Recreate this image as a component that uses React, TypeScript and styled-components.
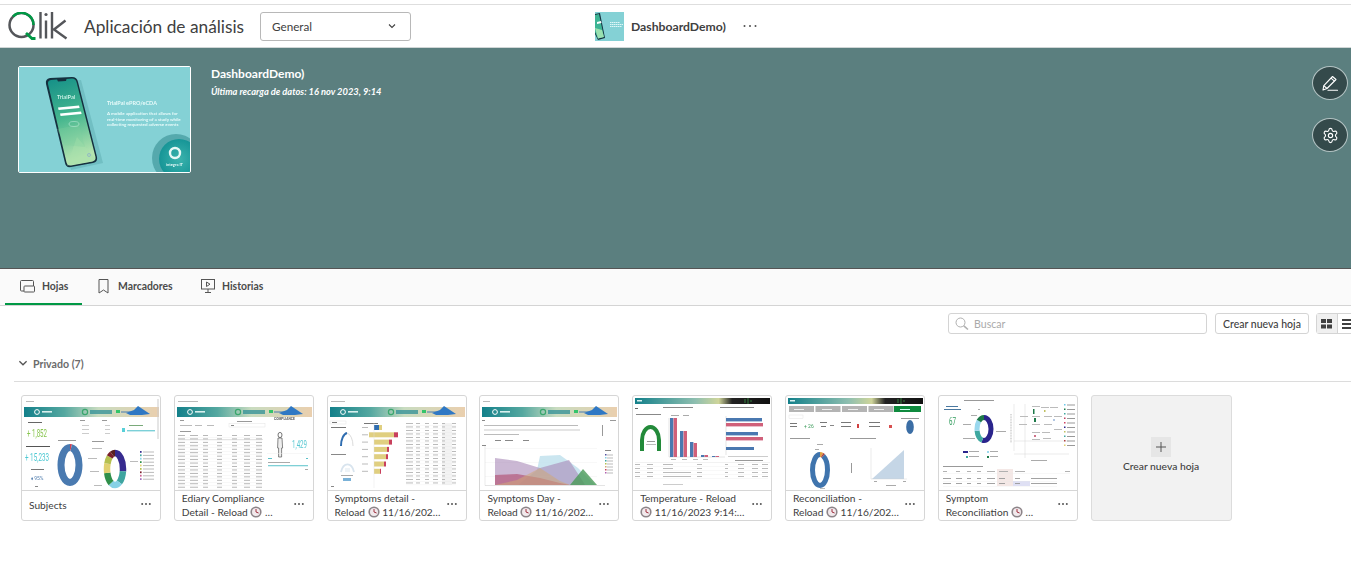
import React from "react";
import styled, { createGlobalStyle } from "styled-components";
import { Settings } from "lucide-react";

const Global = createGlobalStyle`
  html, body { margin: 0; padding: 0; background: #fff; }
  body { font-family: "Lato", "Open Sans", "Liberation Sans", sans-serif; color: #404040; }
  * { box-sizing: border-box; }
`;

const Page = styled.div`width: 1351px; height: 583px; overflow: hidden; background: #fff;`;

const Header = styled.header`
  height: 44px; margin-top: 4px; border-top: 1px solid #dedede;
  border-bottom: 1px solid #d0d6d6;
  display: grid; grid-template-columns: 595px 1fr; align-items: center;
`;
const HeaderLeft = styled.div`display: flex; align-items: center; padding-left: 8px;`;
const HeaderCenter = styled.div`display: flex; align-items: center;`;
const AppTitle = styled.div`margin-left: 15px; font-size: 17.3px; color: #404040; white-space: nowrap; width: 176px;`;
const Select = styled.div`
  width: 151px; height: 29px; border: 1px solid #b8b8b8; border-radius: 3px;
  display: flex; align-items: center; justify-content: space-between; padding: 0 13px 0 11px;
  font-size: 11.7px; color: #404040;
`;
const HeaderName = styled.div`margin-left: 7px; font-size: 12.2px; font-weight: 700; color: #404040; width: 110px;`;
const Hero = styled.section`
  height: 220px; background: #5b7f7f; position: relative;
  padding: 18px 0 0 18px; display: flex; gap: 20px;
`;
const HeroImage = styled.div`
  width: 173px; height: 107px; border: 1px solid #fff; border-radius: 2px; overflow: hidden;
  svg { display: block; filter: blur(.4px); }
`;
const HeroText = styled.div`color: #fff;`;
const HeroTitle = styled.div`font-size: 12px; font-weight: 700; line-height: 16px;`;
const HeroSub = styled.div`font-size: 9.3px; font-style: italic; font-weight: 700; line-height: 12px; margin-top: 4px;`;
const HeroActions = styled.div`
  position: absolute; right: 3px; top: 18px; display: flex; flex-direction: column; gap: 18px;
`;
const RoundBtn = styled.div`
  width: 36px; height: 34px; border-radius: 50%; background: #344a4b; border: 1px solid #b4c4c4;
  display: flex; align-items: center; justify-content: center; color: #fff;
`;
const Tabs = styled.nav`
  height: 38px; background: #fafafa; border-top: 1px solid #555; border-bottom: 1px solid #d4d4d4;
  display: flex; padding-left: 5px;
`;
const Tab = styled.div<{ $active?: boolean; $w: number; $pad: number; $gap?: number }>`
  width: ${p => p.$w}px; height: 36px; padding-left: ${p => p.$pad}px; display: flex; align-items: center; gap: ${p => p.$gap ?? 7}px;
  font-size: 10.4px; font-weight: 700; color: #4a4a4a;
  border-bottom: 2px solid ${p => (p.$active ? "#009845" : "transparent")};
`;
const Toolbar = styled.div`
  height: 28px; padding-top: 7px; display: flex; align-items: flex-start; justify-content: flex-end; margin-right: -8px;
`;
const Search = styled.div`
  width: 259px; height: 21px; border: 1px solid #d4d4d4; border-radius: 3px; display: flex; align-items: center;
  padding-left: 6px; gap: 5px; font-size: 10.6px; color: #aaa;
`;
const Btn = styled.div`
  margin-left: 8px; width: 94px; height: 21px; border: 1px solid #d4d4d4; border-radius: 3px;
  display: flex; align-items: center; justify-content: center; font-size: 10.5px; font-weight: 500; color: #404040;
`;
const Toggle = styled.div`
  margin-left: 7px; width: 43px; height: 21px; border: 1px solid #d4d4d4; border-radius: 3px; display: flex;
`;
const ToggleCell = styled.div<{ $on?: boolean }>`
  width: 21px; display: flex; align-items: center; justify-content: center;
  background: ${p => (p.$on ? "#f0f0f0" : "#fff")}; border-right: 1px solid #d4d4d4;
`;
const SectionHead = styled.div`
  margin: 22px 0 0 14px; height: 26px; border-bottom: 1px solid #dcdcdc; padding: 0 0 8px 3px;
  display: flex; align-items: flex-start; gap: 4px; font-size: 10.6px; font-weight: 700; color: #6b6b6b; line-height: 16px;
  svg { margin-top: 1px; }
`;
const Cards = styled.div`
  padding: 13px 0 0 21px; display: flex; gap: 12.8px;
`;
const Card = styled.div`
  width: 140px; height: 126px; border: 1px solid #d6d6d6; border-radius: 3px; overflow: hidden; flex: none;
  display: flex; flex-direction: column; background: #fff;
`;
const Thumb = styled.div`
  height: 95px; border-bottom: 1px solid #d6d6d6; overflow: hidden; flex: none;
  svg { display: block; filter: blur(.42px); }
`;
const CardFoot = styled.div`
  flex: 1; display: flex; align-items: center; justify-content: space-between; padding: 0 9px 1px 7px;
`;
const CardTitle = styled.div`width: 108px; font-size: 10.2px; line-height: 14px; color: #404040;`;
const CardLine = styled.div`white-space: nowrap; overflow: hidden;`;
const NewCard = styled.div`
  width: 141px; height: 126px; background: #f2f2f2; border: 1px solid #dcdcdc; border-radius: 3px; flex: none;
  display: flex; flex-direction: column; align-items: center; padding-top: 41px; gap: 3px;
  font-size: 10.3px; font-weight: 500; color: #404040;
`;
const PlusBox = styled.div`
  width: 20px; height: 20px; background: #e6e6e6; display: flex; align-items: center; justify-content: center;
`;

const Clock = () => (
  <svg width="12" height="12" viewBox="0 0 12 12" style={{ verticalAlign: "-2px" }}>
    <circle cx="6" cy="6" r="5.6" fill="#8c8488" />
    <circle cx="6" cy="6" r="4" fill="#f1e9ec" />
    <path d="M6 3v3l2.6 1" stroke="#a0303f" strokeWidth="1" fill="none" />
  </svg>
);
const Dots = () => (
  <svg width="10" height="4" viewBox="0 0 10 4" style={{ flex: "none", marginBottom: 2 }}>
    <circle cx="1.2" cy="2" r="1" fill="#555" /><circle cx="5" cy="2" r="1" fill="#555" /><circle cx="8.8" cy="2" r="1" fill="#555" />
  </svg>
);

const QlikLogo = () => (
  <svg width="61" height="28" viewBox="0 0 61 28" fill="none">
    <circle cx="13.500" cy="13" r="12" stroke="#54565a" strokeWidth="2.500" />
    <path d="M5 4.500A12 12 0 0 1 25.500 13" stroke="#009845" strokeWidth="2.500" />
    <path d="M18 21L24 26.500H27.500" stroke="#009845" strokeWidth="2.800" />
    <path d="M32.500 0V26.500M38 8.500V26.500M44 0V26.500M57.500 8.500L46 17.500L58.500 26.500" stroke="#54565a" strokeWidth="2.400" />
    <circle cx="38" cy="2.500" r="1.600" fill="#54565a" />
  </svg>
);

type Seg = [number, string];
const Donut = ({ cx, cy, rx, ry, w, segs }: { cx: number; cy: number; rx: number; ry: number; w: number; segs: Seg[] }) => {
  let off = 0;
  return (
    <g transform={`translate(${cx} ${cy}) rotate(-90)`}>
      {segs.map(([v, c], i) => {
        const el = <ellipse key={i} rx={ry} ry={rx} fill="none" stroke={c} strokeWidth={w} pathLength={100} strokeDasharray={`${v} ${100 - v}`} strokeDashoffset={-off} />;
        off += v;
        return el;
      })}
    </g>
  );
};
const Banner = ({ y = 11 }: { y?: number }) => (
  <g>
    <defs>
      <linearGradient id="bn" x1="0" x2="1"><stop offset="0" stopColor="#13808a" /><stop offset=".3" stopColor="#55a8a0" /><stop offset=".55" stopColor="#c9dcc0" /><stop offset="1" stopColor="#eacfae" /></linearGradient>
    </defs>
    <rect x="2" y={y} width="135" height="10" fill="url(#bn)" />
    <circle cx="15" cy={y + 5} r="2.4" fill="none" stroke="#fff" strokeWidth="1" />
    <rect x="20" y={y + 4} width="10" height="1.6" fill="#d8f0ee" />
    <circle cx="63" cy={y + 5} r="2.6" fill="none" stroke="#3aa76d" strokeWidth="1.2" />
    <rect x="68" y={y + 3} width="22" height="4" fill="#2f8f95" opacity=".75" />
    <rect x="94" y={y + 3} width="4" height="3" fill="#35c46a" />
    <rect x="99" y={y + 4} width="12" height="2" fill="#8fa9b4" />
    <path d={`M104 ${y + 6} L112 ${y + 3} L116 ${y - 1} L122 ${y + 3} L128 ${y + 7} L120 ${y + 8} L108 ${y + 8}Z`} fill="#2f78c4" />
  </g>
);
const TopBar = () => (
  <g>
    <defs>
      <linearGradient id="tb" x1="0" x2="1"><stop offset="0" stopColor="#13808a" /><stop offset=".45" stopColor="#8fbfb0" /><stop offset=".62" stopColor="#cfd59a" /><stop offset=".72" stopColor="#222" /><stop offset="1" stopColor="#111" /></linearGradient>
    </defs>
    <rect x="2" y="2" width="135" height="6" fill="url(#tb)" />
    <path d="M112 7V3M115 8V2M118 6V4" stroke="#3fae4f" strokeWidth=".7" />
    <rect x="4" y="4" width="5" height="1.5" fill="#d8f0ee" />
  </g>
);
const Cap = ({ x, y, w, c = "#999", h = 1 }: { x: number; y: number; w: number; c?: string; h?: number }) => <rect x={x} y={y} width={w} height={h} fill={c} />;
const Big = ({ x, y, w, c, children }: { x: number; y: number; w: number; c: string; children: string }) => (
  <text x={x} y={y} fontSize="10.500" fill={c} textLength={w} lengthAdjust="spacingAndGlyphs">{children}</text>
);
const Table = ({ x, y, rows, step, cols, c = "#a5a5a5" }: { x: number; y: number; rows: number; step: number; cols: [number, number][]; c?: string }) => (
  <g>
    {Array.from({ length: rows }).map((_, r) => (
      <g key={r}>
        {cols.map(([cx, w], i) => <rect key={i} x={x + cx} y={y + r * step} width={w} height=".9" fill={c} />)}
        <rect x={x} y={y + r * step + step * 0.65} width={cols[cols.length - 1][0] + cols[cols.length - 1][1]} height=".3" fill="#e8e8e8" />
      </g>
    ))}
  </g>
);
const Svg = ({ children }: { children: React.ReactNode }) => <svg width="138" height="94" viewBox="0 0 138 94" fontFamily="Roboto, sans-serif">{children}</svg>;

const T1 = () => (
  <Svg>
    <Cap x={4} y={5} w={8} c="#bbb" /><Banner />
    <Cap x={6} y={26} w={14} c="#666" />
    <Big x={5} y={41} w={20} c="#86c54c">+ 1,852</Big>
    <Cap x={4} y={50} w={24} c="#555" />
    <Big x={3} y={65} w={24} c="#4cc8d2">+ 15,233</Big>
    <Cap x={9} y={73} w={13} c="#777" />
    <text x="9" y="84" fontSize="5" fill="#5580b0">⬧ 95%</text>
    <Cap x={13} y={90} w={3} c="#888" />
    <Cap x={58} y={24} w={5} /><Cap x={60} y={29} w={7} c="#ccc" /><Cap x={60} y={33} w={7} c="#ccc" /><Cap x={60} y={37} w={7} c="#ccc" />
    <Cap x={80} y={24} w={5} /><Cap x={83} y={29} w={5} c="#ccc" /><Cap x={83} y={33} w={5} c="#ccc" /><Cap x={83} y={37} w={5} c="#ccc" />
    <Cap x={107} y={29} w={14} c="#7aaa7a" /><rect x="100" y="32" width="3" height="4" fill="#58d0d8" /><Cap x={105} y={34} w={28} c="#7cd0d8" h={1.4} />
    <Cap x={36} y={44} w={18} /><Cap x={70} y={45} w={12} />
    <Donut cx={48} cy={69} rx={9} ry={17.5} w={7} segs={[[1.5, "#d04050"], [98.5, "#4a7ab0"]]} />
    <Donut cx={93} cy={73} rx={8} ry={16} w={6.5} segs={[[28, "#372b8f"], [15, "#3fa5a0"], [13, "#86d1e6"], [14, "#2f8f4a"], [12, "#e0d070"], [9, "#b5c050"], [5, "#7a1f2a"], [4, "#5a1f1f"]]} />
    <Cap x={70} y={52} w={10} c="#bbb" /><Cap x={66} y={62} w={9} c="#bbb" /><Cap x={68} y={75} w={9} c="#bbb" /><Cap x={72} y={89} w={8} c="#bbb" /><Cap x={108} y={65} w={8} c="#bbb" />
    {["#372b8f", "#3fa5a0", "#86d1e6", "#2f8f4a", "#e0d070", "#b5c050", "#7a1f2a", "#d06090", "#a070c0"].map((c, i) => (
      <g key={i}><rect x="118" y={55 + i * 3.4} width="1.6" height="1.8" fill={c} /><Cap x={121} y={55.5 + i * 3.4} w={11} c="#bbb" /></g>
    ))}
    <rect x="135.500" y="3" width="1" height="40" fill="#ccc" />
  </Svg>
);
const T2 = () => (
  <Svg>
    <Cap x={3} y={5} w={20} c="#bbb" /><Banner />
    <Cap x={5} y={24} w={4} /><Cap x={5} y={29} w={12} c="#bbb" /><Cap x={20} y={29} w={7} c="#bbb" /><Cap x={32} y={29} w={7} c="#bbb" />
    <Cap x={62} y={25} w={15} /><rect x="54" y="27.500" width="36" height="3.500" fill="none" stroke="#ddd" strokeWidth=".4" /><Cap x={56} y={29} w={3} c="#888" />
    <Cap x={5} y={35} w={11} c="#999" />
    <Table x={3} y={39} rows={17} step={3.45} cols={[[0, 7], [12, 8], [25, 5], [39, 5], [54, 5], [66, 6], [78, 6]]} c="#b0b0b0" />
    <Cap x={3} y={43} w={85} c="#bbb" h={.4} />
    <text x="99" y="24" fontSize="3.300" fontWeight="700" fill="#555">COMPLIANCE</text>
    <ellipse cx="105" cy="39" rx="2" ry="2.600" fill="none" stroke="#555" strokeWidth=".8" />
    <path d="M103 42h4l.6 10h-1v9h-3v-9h-1z" fill="#eee" stroke="#555" strokeWidth=".7" />
    <Big x={117} y={52} w={15} c="#58c8d2">1,429</Big>
    <Cap x={92} y={57} w={44} c="#eee" h={.5} />
    <Cap x={93} y={62} w={4} c="#5cc0c8" /><Cap x={131} y={62} w={2} c="#5cc0c8" />
    <Cap x={93} y={66} w={22} c="#aaa" />
    <rect x="93" y="69" width="40" height="1.300" fill="#7fd0d6" />
    <Cap x={130} y={73} w={3} c="#aaa" />
  </Svg>
);
const T3 = () => {
  const ws: [number, string, number, string][] = [[5, "#2f6db0", 3, "#e0cf80"], [25, "#e0cf80", 4, "#c8405c"], [15, "#e0cf80", 3, "#c8405c"], [13, "#e0cf80", 2, "#c8405c"], [12, "#e0cf80", 2, "#c8405c"], [10, "#e0cf80", 2, "#c8405c"], [6, "#e0cf80", 1, "#c8405c"]];
  return (
    <Svg>
      <Cap x={3} y={5} w={14} c="#bbb" /><Banner />
      <rect x="2" y="25" width="16" height="3" fill="none" stroke="#ddd" strokeWidth=".4" /><Cap x={4} y={26} w={5} c="#777" />
      <Cap x={3} y={31} w={15} c="#777" /><Cap x={36} y={27} w={14} c="#777" />
      <path d="M13 50A7 13 0 0 1 19 37" fill="none" stroke="#2f6db0" strokeWidth="2" />
      <path d="M19 37A7 13 0 0 1 25 50" fill="none" stroke="#ccc" strokeWidth=".7" />
      <Cap x={3} y={58} w={15} c="#888" />
      <path d="M13 76A7 12 0 0 1 26 76" fill="none" stroke="#d8e4ee" strokeWidth="1.800" />
      <rect x="17" y="72" width="5" height="4" fill="#eef3f7" />
      <Cap x={13} y={79} w={12} c="#aaa" /><rect x="15" y="82" width="8" height="3" fill="#7ab2d8" />
      <Cap x={3} y={90} w={3} c="#888" />
      {ws.map(([a, ca, b, cb], i) => {
        const x = i === 1 ? 41 : 46;
        return <g key={i}><rect x={x} y={29 + i * 7.3} width={a} height="5" fill={ca} /><rect x={x + a} y={29 + i * 7.3} width={b} height="5" fill={cb} /><Cap x={34} y={31 + i * 7.3} w={6} c="#bbb" /></g>;
      })}
      <path d="M46 27V92" stroke="#ddd" strokeWidth=".4" />
      <rect x="114" y="27" width="10" height="62" fill="#f3f3f3" />
      <Table x={78} y={27} rows={18} step={3.5} cols={[[0, 7], [10, 4], [19, 4], [27, 5], [36, 3], [46, 4]]} c="#b4b4b4" />
    </Svg>
  );
};
const T4 = () => (
  <Svg>
    <Cap x={3} y={5} w={7} c="#bbb" /><Banner />
    <Cap x={2} y={24} w={3} c="#888" /><Cap x={130} y={24} w={6} c="#999" />
    <Cap x={4} y={29} w={94} c="#bbb" /><Cap x={4} y={33.500} w={96} c="#ccc" /><Cap x={4} y={38} w={35} c="#bbb" />
    <rect x="122" y="29" width="1" height="11" fill="#999" />
    <Cap x={15} y={44} w={6} c="#888" /><Cap x={25} y={44} w={8} c="#888" /><Cap x={43} y={44} w={6} c="#888" /><Cap x={2} y={49} w={4} c="#888" />
    {[52, 66, 80].map(y => <Cap key={y} x={5} y={y} w={112} c="#eee" h={.4} />)}
    <path d="M38 89L57 74 60 60 80 59 98 72 115 89z" fill="#c5e3ee" opacity=".9" />
    <path d="M15 89L15 62 37 65 60 72 89 64 102 84 105 89z" fill="#a988b8" opacity=".6" />
    <path d="M15 89L15 79 37 78 60 82 80 87 90 89z" fill="#b04a6a" opacity=".6" />
    <path d="M15 89L37 84 60 72 80 85 90 89z" fill="#d0a878" opacity=".55" />
    <path d="M90 89L103 73 117 89z" fill="#4a9a58" opacity=".8" />
    <path d="M5 89.500H125" stroke="#bbb" strokeWidth=".4" /><path d="M5 50V89.500" stroke="#ccc" strokeWidth=".4" />
    <Cap x={125} y={54} w={6} c="#888" />
    {["#5050a0", "#86d1e6", "#3fa5a0", "#b5c050", "#d0a878", "#c8405c", "#b060b0"].map((c, i) => <g key={i}><rect x="125" y={58 + i * 3} width="1.500" height="1.500" fill={c} /><Cap x={127} y={58.500 + i * 3} w={6} c="#bbb" /></g>)}
  </Svg>
);
const T5 = () => (
  <Svg>
    <TopBar />
    <Cap x={2} y={12} w={3} c="#666" />
    <Cap x={30} y={11} w={30} c="#888" /><Cap x={87} y={11} w={34} c="#888" /><Cap x={3} y={18} w={25} c="#888" />
    <path d="M9 55V44A8.500 13 0 0 1 26 44V55" fill="none" stroke="#238a3a" strokeWidth="4" />
    <Cap x={14} y={45} w={8} c="#999" /><Cap x={13} y={48} w={10} c="#bbb" />
    <Cap x={38} y={19} w={8} c="#aaa" /><Cap x={50} y={19} w={6} c="#aaa" />
    <path d="M36 22V61H92" stroke="#bbb" strokeWidth=".4" fill="none" />
    {[[37, 22, 22], [47, 35, 35], [57, 46, 47], [68, 59, 59], [79, 60, 60]].map(([x, a, b], i) => (
      <g key={i}>
        <rect x={x} y={a} width="3.400" height={61 - a} fill="#4a78b0" />
        <rect x={x + 3.600} y={b} width="3.400" height={61 - b} fill="#d0607a" />
      </g>
    ))}
    <Cap x={38} y={63} w={5} c="#bbb" /><Cap x={49} y={63} w={5} c="#bbb" /><Cap x={60} y={63} w={5} c="#bbb" /><Cap x={70} y={63} w={5} c="#bbb" />
    <path d="M93 20V59" stroke="#bbb" strokeWidth=".4" />
    <Cap x={93} y={22} w={36} c="#4a78b0" h={3.400} /><Cap x={93} y={27} w={37} c="#d0607a" h={3.400} />
    <Cap x={93} y={36} w={32} c="#4a78b0" h={3.400} /><Cap x={93} y={41} w={37} c="#d0607a" h={3.400} />
    <Cap x={93} y={51} w={28} c="#4a78b0" h={3} />
    <Cap x={95} y={60} w={40} c="#ccc" /><Cap x={102} y={64} w={28} c="#999" />
    <Cap x={2} y={66} w={135} c="#ddd" h={.4} />
    <Table x={2} y={68} rows={2} step={4} cols={[[0, 5], [12, 6], [28, 10], [62, 5], [90, 3], [103, 6], [117, 6], [127, 6]]} c="#b4b4b4" />
    <Table x={2} y={76} rows={2} step={4} cols={[[0, 5], [12, 6], [28, 28], [62, 5], [90, 3], [103, 6], [117, 6], [127, 6]]} c="#b4b4b4" />
    <Cap x={30} y={88} w={20} c="#ccc" />
  </Svg>
);
const T6 = () => (
  <Svg>
    <TopBar />
    {[0, 1, 2, 3].map(i => <rect key={i} x={3 + i * 26.500} y="10" width="25" height="6" fill="#b4b4b4" />)}
    <rect x="108" y="10" width="27" height="6" fill="#0f8a3e" />
    {[8, 36, 62, 88, 114].map((x, i) => <Cap key={x} x={x} y={13} w={10} c={i === 4 ? "#cfe" : "#eee"} />)}
    <rect x="3" y="19" width="14" height="3.500" fill="none" stroke="#ddd" strokeWidth=".4" />
    <Cap x={4} y={27} w={7} c="#777" /><Cap x={4} y={30} w={7} c="#777" /><text x="18" y="32" fontSize="5" fill="#3a9a5a">+ 26</text>
    <Cap x={34} y={26} w={7} c="#777" /><Cap x={35} y={30} w={5} c="#777" /><Cap x={44} y={29} w={4} c="#888" />
    <Cap x={55} y={26} w={10} c="#777" /><Cap x={55} y={30} w={10} c="#777" /><rect x="71" y="28" width="2" height="4" fill="#d04040" />
    <Cap x={83} y={26} w={11} c="#777" /><Cap x={83} y={30} w={11} c="#777" /><rect x="103" y="29" width="3" height="3" fill="#d85050" />
    <Cap x={115} y={22} w={18} c="#999" />
    <ellipse cx="124" cy="31" rx="3.800" ry="7" fill="#3b6ea5" />
    <Cap x={4} y={42} w={20} c="#999" /><Cap x={64} y={42} w={26} c="#999" />
    <Cap x={31} y={48} w={6} c="#aaa" /><Cap x={29} y={53} w={4} c="#aaa" />
    <Donut cx={34} cy={74} rx={7.500} ry={15.500} w={5} segs={[[3, "#e0a040"], [2, "#b04040"], [95, "#3f74ad"]]} />
    <Cap x={34} y={92} w={5} c="#bbb" />
    <path d="M86 83L118 54V83z" fill="#c5d6e6" />
    <path d="M85 52V83H121" stroke="#ccc" strokeWidth=".4" fill="none" />
    <Cap x={65} y={67} w={1} c="#999" h={10} /><Cap x={88} y={85} w={3} c="#aaa" /><Cap x={117} y={85} w={3} c="#aaa" /><Cap x={100} y={89} w={10} c="#aaa" />
  </Svg>
);
const T7 = () => (
  <Svg>
    <Cap x={25} y={4} w={30} c="#999" />
    <Cap x={7} y={10} w={12} c="#4a78a0" /><Cap x={5} y={13} w={17} c="#4a78a0" />
    <Big x={10} y={29} w={7} c="#2e9a5a">67</Big>
    <Donut cx={45} cy={33} rx={7} ry={11.500} w={5} segs={[[53, "#2a248c"], [19, "#3fa8a0"], [17, "#9ad8ee"], [11, "#1e7a4a"]]} />
    <Cap x={39} y={13} w={2} c="#aaa" /><Cap x={32} y={19} w={6} c="#aaa" /><Cap x={24} y={28} w={8} c="#aaa" /><Cap x={24} y={42} w={12} c="#aaa" /><Cap x={57} y={35} w={10} c="#aaa" />
    <rect x="24" y="55" width="5" height="2" fill="#2a248c" /><Cap x={30} y={55} w={10} c="#aaa" /><rect x="48" y="55" width="2" height="2" fill="#9ad8ee" /><Cap x={51} y={55} w={8} c="#aaa" />
    <rect x="27" y="60" width="2" height="2" fill="#3fa8a0" /><Cap x={30} y={60} w={10} c="#aaa" /><rect x="48" y="60" width="2" height="2" fill="#1e7a4a" /><Cap x={51} y={60} w={8} c="#aaa" />
    <path d="M75 8V55M86 8V62M75 45H130M75 58H130" stroke="#ccc" strokeWidth=".4" fill="none" />
    <path d="M72 18V47" stroke="#999" strokeWidth=".7" strokeDasharray="1 .6" />
    <rect x="94" y="13" width="1.500" height="5" fill="#1e7a4a" /><rect x="95" y="22" width="2" height="4" fill="#1e7a4a" />
    <rect x="105" y="14" width="1.500" height="2" fill="#c0c060" /><circle cx="115" cy="24" r=".8" fill="#5080c0" /><circle cx="96" cy="40" r="1" fill="#c04060" />
    {[[93, 10], [102, 11], [111, 11], [81, 20], [93, 20], [105, 20], [115, 20], [80, 28], [93, 28], [105, 28], [115, 33], [93, 36], [103, 36], [93, 43], [104, 42]].map(([x, y], i) => <Cap key={i} x={x} y={y} w={8} c="#bbb" />)}
    {["#6ac8ea", "#1e7a4a", "#3fa8a0", "#c04060", "#d04060", "#2a248c", "#c0c060", "#3fa8a0", "#b04040", "#e0d070"].map((c, i) => <g key={i}><rect x="125" y={8 + i * 4.500} width="1.500" height="1.500" fill={c} /><Cap x={128} y={8.500 + i * 4.500} w={8} c="#999" /></g>)}
    <Cap x={92} y={64} w={16} c="#aaa" />
    <Cap x={4} y={70} w={40} c="#999" />
    <rect x="58" y="73" width="16" height="17" fill="#f4e8e6" /><rect x="74" y="85" width="17" height="5" fill="#dfe0f4" />
    <Table x={4} y={75} rows={1} step={4} cols={[[0, 4], [13, 4], [24, 4], [34, 4], [44, 8], [56, 9], [72, 10], [122, 5]]} c="#aaa" />
    <Table x={4} y={82} rows={2} step={5} cols={[[0, 8], [13, 6], [24, 4], [34, 4], [44, 8], [56, 6], [72, 5], [88, 26]]} c="#999" />
  </Svg>
);

const HeroArt = () => (
  <svg width="171" height="105" viewBox="0 0 171 105" fontFamily="Lato, sans-serif">
    <defs>
      <linearGradient id="scr" x1="0" y1="0" x2="0.2" y2="1"><stop offset="0" stopColor="#148f88" /><stop offset=".5" stopColor="#45b68e" /><stop offset="1" stopColor="#b5e4b0" /></linearGradient>
      <radialGradient id="badge" cx=".5" cy=".5" r=".6"><stop offset="0" stopColor="#3bb3ad" /><stop offset="1" stopColor="#0f8f92" /></radialGradient>
    </defs>
    <rect width="171" height="105" fill="#84d1d5" />
    <path d="M30 16L62 13 84 96 52 103Z" fill="#5ba9ad" opacity=".45" />
    <path d="M31 11L53 10Q58 10 59 15L78 90Q79 95 74 96L52 100Q47 101 46 96L27 17Q26 12 31 11Z" fill="#15303f" />
    <path d="M32 13L38 12.500L39 14.500L47 14L47.500 12L53 11.500Q56.500 11.500 57.500 15L76.500 90Q77 93.500 73.500 94.500L52 98.500Q48.500 99 47.500 95.500L29 17Q28.500 13.500 32 13Z" fill="url(#scr)" />
    <path d="M48 98.500L58 70 76.500 92 73 94.500Z" fill="#a8e0ac" opacity=".55" />
    <path d="M38 62L60 58 66 80 46 78Z" fill="#7fd0a0" opacity=".3" />
    <text x="38" y="32" fontSize="5.800" fill="#e8fff8">TrialPal</text>
    <path d="M39 40.500L60 38.500 60.600 41 39.600 43Z" fill="#fff" />
    <path d="M41 46.500L62 44.500 62.600 47 41.600 49Z" fill="#fff" />
    <ellipse cx="55" cy="57" rx="5" ry="2.500" fill="none" stroke="#c8f0e0" strokeWidth=".5" />
    <circle cx="70" cy="88" r="1.500" fill="none" stroke="#8ac" strokeWidth=".7" />
    <text x="88" y="38" fontSize="5.500" fontWeight="700" fill="#e8fbfa">TrialPal ePRO/eCDA</text>
    <g fontSize="4.500" fontWeight="700" fill="#e8fbfa">
      <text x="88" y="48">A mobile application that allows for</text>
      <text x="88" y="53.500">real-time monitoring of a study while</text>
      <text x="88" y="59">collecting requested adverse events</text>
    </g>
    <circle cx="157" cy="91" r="24" fill="#55a9ad" />
    <circle cx="160" cy="92" r="20" fill="url(#badge)" />
    <circle cx="156" cy="86" r="5" fill="none" stroke="#e6f8f6" strokeWidth="2.400" />
    <text x="147" y="99" fontSize="4" fontWeight="700" fill="#e8fbfa">integra IT</text>
  </svg>
);
const SmallArt = () => (
  <svg width="29" height="29" viewBox="0 0 29 29" style={{ flex: "none" }}>
    <rect width="29" height="29" fill="#84d1d5" />
    <polygon points="0,2 5,1 10,26 3,28 0,22" fill="#15303f" />
    <polygon points="0,3 4,2 9,25 3,26.500 0,20" fill="#3db494" />
    <polygon points="2,10 6,9 6.500,11 2,12" fill="#fff" />
    <polygon points="0,16 7,18 9,25 3,26.500" fill="#9ae0b0" />
    <path d="M15 10.500h10M15 12.500h13M15 14.500h12" stroke="#eafbfb" strokeWidth=".9" strokeDasharray="1.500 .5" />
  </svg>
);

const Chevron = ({ size = 10, color = "#404040" }: { size?: number; color?: string }) => (
  <svg width={size} height={size} viewBox="0 0 10 10" fill="none" stroke={color} strokeWidth="1.100"><path d="M2 3.500L5 6.500L8 3.500" /></svg>
);
const PencilIcon = () => (
  <svg width="18" height="18" viewBox="0 0 18 18" fill="none" stroke="#fff" strokeWidth="1.100" strokeLinejoin="round">
    <path d="M2 16l.8-4.300L11.500 2.500l3.500 3L6 14.500z" />
    <path d="M10 4.200l3.500 3M2.800 11.700l3.200 2.800" />
    <path d="M7 16.300h9.500" strokeLinecap="round" />
  </svg>
);
const SheetIcon = () => (
  <svg width="15" height="13" viewBox="0 0 15 13" fill="none" stroke="#555" strokeWidth="1">
    <path d="M4 11H1.500a1 1 0 0 1-1-1V1.500a1 1 0 0 1 1-1h11a1 1 0 0 1 1 1V6" />
    <rect x="4" y="6" width="10.500" height="6" rx=".8" />
  </svg>
);
const BookmarkIcon = () => (
  <svg width="11" height="15" viewBox="0 0 11 15" fill="none" stroke="#555" strokeWidth="1"><path d="M1 .5h9v13.500l-4.500-3L1 14z" /></svg>
);
const StoryIcon = () => (
  <svg width="14" height="14" viewBox="0 0 14 14" fill="none" stroke="#555" strokeWidth="1">
    <rect x=".5" y=".5" width="13" height="9.500" />
    <path d="M5.500 3v4.500L9 5.200zM7 10v3M4 13.500h6" />
  </svg>
);
const SearchIcon = () => (
  <svg width="14" height="14" viewBox="0 0 14 14" fill="none" stroke="#b0b0b0" strokeWidth="1"><circle cx="5.500" cy="5.500" r="4.500" /><path d="M8.800 8.800L13 12.500" strokeWidth="1.600" /></svg>
);
const GridIcon = () => (
  <svg width="11" height="10" viewBox="0 0 11 10" fill="#404040"><rect width="5" height="4" /><rect x="6" width="5" height="4" /><rect y="5.500" width="5" height="4" /><rect x="6" y="5.500" width="5" height="4" /></svg>
);
const ListIcon = () => (
  <svg width="11" height="10" viewBox="0 0 11 10" fill="#404040"><rect width="11" height="2" /><rect y="4" width="11" height="2" /><rect y="8" width="11" height="2" /></svg>
);
const PlusIcon = () => (
  <svg width="10" height="10" viewBox="0 0 10 10" stroke="#555" strokeWidth="1"><path d="M5 0v10M0 5h10" /></svg>
);
const MoreIcon = () => (
  <svg width="14" height="4" viewBox="0 0 14 4" fill="#505050" style={{ marginLeft: 2 }}>
    <circle cx="1.500" cy="2" r="1" /><circle cx="7" cy="2" r="1" /><circle cx="12.500" cy="2" r="1" />
  </svg>
);

const sheets: { art: React.ReactNode; lines: React.ReactNode[] }[] = [
  { art: <T1 />, lines: ["Subjects"] },
  { art: <T2 />, lines: ["Ediary Compliance", <>Detail - Reload <Clock /> …</>] },
  { art: <T3 />, lines: ["Symptoms detail -", <>Reload <Clock /> 11/16/202…</>] },
  { art: <T4 />, lines: ["Symptoms Day -", <>Reload <Clock /> 11/16/202…</>] },
  { art: <T5 />, lines: ["Temperature - Reload", <><Clock /> 11/16/2023 9:14:…</>] },
  { art: <T6 />, lines: ["Reconciliation -", <>Reload <Clock /> 11/16/202…</>] },
  { art: <T7 />, lines: ["Symptom", <>Reconciliation <Clock /> …</>] },
];

export default function App() {
  return (
    <Page>
      <Global />
      <Header>
        <HeaderLeft>
          <QlikLogo />
          <AppTitle>Aplicación de análisis</AppTitle>
          <Select>General <Chevron /></Select>
        </HeaderLeft>
        <HeaderCenter>
          <SmallArt />
          <HeaderName>DashboardDemo)</HeaderName>
          <MoreIcon />
        </HeaderCenter>
      </Header>
      <Hero>
        <HeroImage><HeroArt /></HeroImage>
        <HeroText>
          <HeroTitle>DashboardDemo)</HeroTitle>
          <HeroSub>Última recarga de datos: 16 nov 2023, 9:14</HeroSub>
        </HeroText>
        <HeroActions>
          <RoundBtn><PencilIcon /></RoundBtn>
          <RoundBtn><Settings size={17} strokeWidth={1.6} /></RoundBtn>
        </HeroActions>
      </Hero>
      <Tabs>
        <Tab $active $w={77} $pad={15}><SheetIcon />Hojas</Tab>
        <Tab $w={104} $pad={16} $gap={9}><BookmarkIcon />Marcadores</Tab>
        <Tab $w={90} $pad={15}><StoryIcon />Historias</Tab>
      </Tabs>
      <Toolbar>
        <Search><SearchIcon />Buscar</Search>
        <Btn>Crear nueva hoja</Btn>
        <Toggle>
          <ToggleCell $on><GridIcon /></ToggleCell>
          <ToggleCell><ListIcon /></ToggleCell>
        </Toggle>
      </Toolbar>
      <SectionHead><Chevron size={12} color="#555" />Privado (7)</SectionHead>
      <Cards>
        {sheets.map((s, i) => (
          <Card key={i}>
            <Thumb>{s.art}</Thumb>
            <CardFoot>
              <CardTitle>{s.lines.map((l, j) => <CardLine key={j}>{l}</CardLine>)}</CardTitle>
              <Dots />
            </CardFoot>
          </Card>
        ))}
        <NewCard>
          <PlusBox><PlusIcon /></PlusBox>
          Crear nueva hoja
        </NewCard>
      </Cards>
    </Page>
  );
}
